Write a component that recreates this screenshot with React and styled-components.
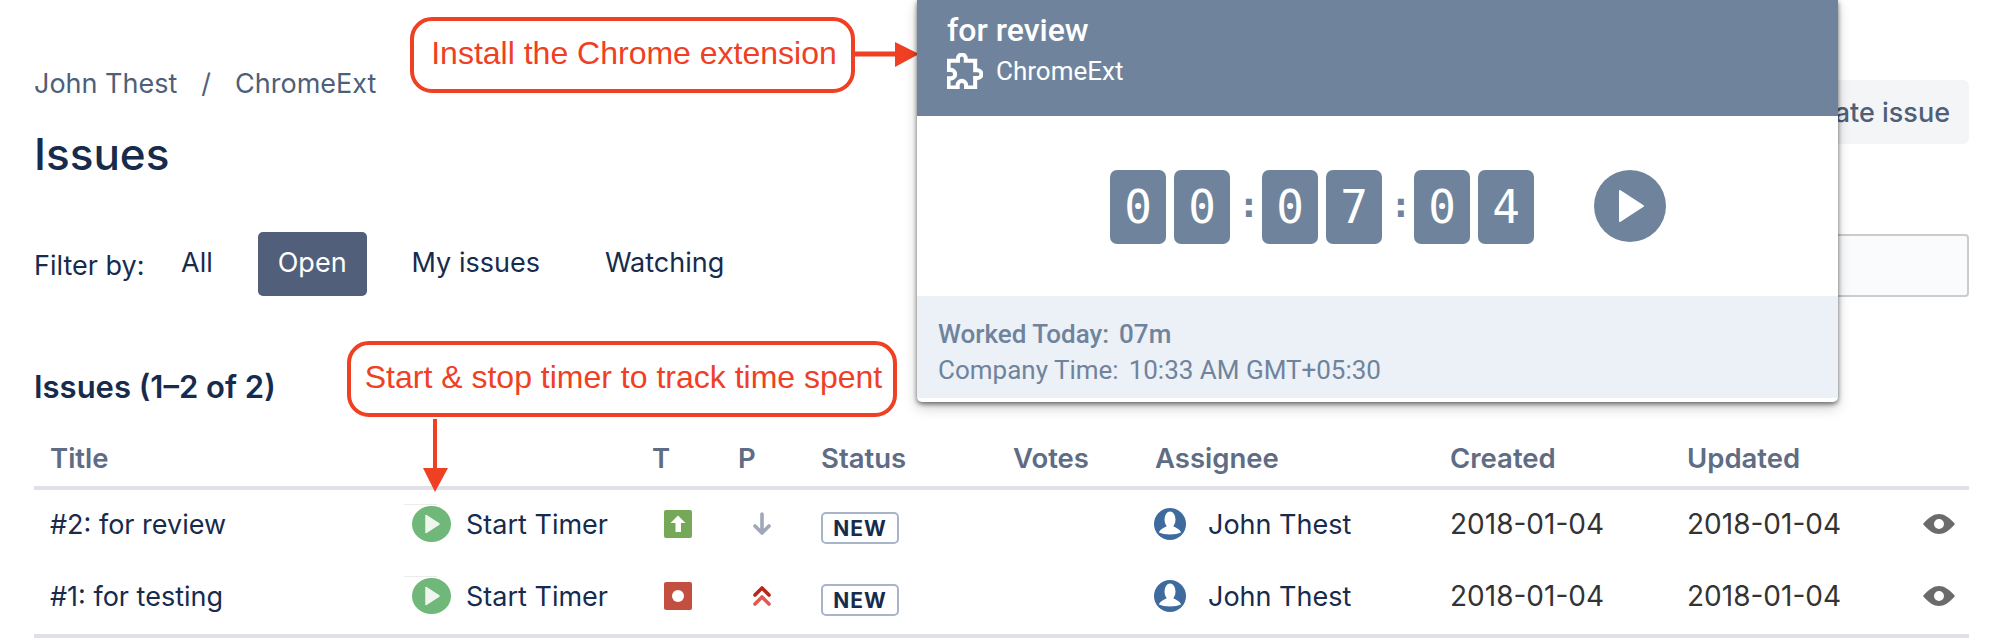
import React from 'react';
import styled, { createGlobalStyle } from 'styled-components';

const Global = createGlobalStyle`
  html, body { margin: 0; padding: 0; background: #fff; }
  body { font-family: Inter, "Liberation Sans", sans-serif; color: #172b4d; }
  * { box-sizing: border-box; }
`;

const Page = styled.div`
  position: relative;
  width: 1990px;
  height: 638px;
  overflow: hidden;
  padding: 0 21px 0 34px;
  background: #fff;
`;

const Head = styled.header`
  display: flex;
  justify-content: space-between;
  align-items: flex-start;
  height: 232px;
  padding-top: 65px;
`;

const Breadcrumb = styled.nav`
  display: flex;
  gap: 24px;
  font-size: 27px;
  line-height: 38px;
  color: #505f79;
`;

const Title = styled.h1`
  margin: 25px 0 0;
  font-size: 44px;
  line-height: 52px;
  font-weight: 500;
  color: #172b4d;
`;

const CreateButton = styled.button`
  margin-top: 15px;
  height: 64px;
  width: 300px;
  border: 0;
  border-radius: 6px;
  padding: 0 19px;
  background: #f4f5f7;
  color: #505f79;
  font: 500 27px Inter, sans-serif;
  text-align: right;
`;

const FilterBar = styled.div`
  display: flex;
  align-items: flex-start;
  height: 108px;
`;

const FilterLabel = styled.span`
  font-size: 27px;
  line-height: 34px;
  margin-top: 17px;
  width: 147px;
  color: #172b4d;
`;

const FilterLink = styled.a`
  display: flex;
  align-items: center;
  justify-content: center;
  height: 64px;
  padding: 0 ${(p) => p.$pad}px 4px;
  margin-right: ${(p) => p.$gap}px;
  border-radius: 5px;
  font-size: 27px;
  background: ${(p) => (p.$active ? '#525f7a' : 'transparent')};
  color: ${(p) => (p.$active ? '#fff' : '#172b4d')};
`;

const SearchInput = styled.div`
  margin-left: auto;
  margin-top: 2px;
  width: 400px;
  height: 63px;
  border: 2px solid #ccc;
  border-radius: 4px;
  background: #fafbfc;
`;

const IssueCount = styled.h2`
  margin: 29px 0 0;
  height: 52px;
  font-size: 31px;
  line-height: 36px;
  font-weight: 600;
  color: #172b4d;
`;

const Grid = styled.div`
  display: grid;
  grid-template-columns: 362px 256px 86px 83px 192px 142px 295px 237px 236px 46px;
`;

const HeadRow = styled.div`
  display: contents;
`;

const HeadCell = styled.div`
  height: 69px;
  padding-top: 20px;
  padding-left: ${(p) => p.$left || 0}px;
  font-size: 27.5px;
  line-height: 34px;
  font-weight: 600;
  color: #5e6c84;
  border-bottom: 4px solid #dfe1e6;
`;

const Cell = styled.div`
  display: flex;
  align-items: center;
  height: 72px;
  padding-bottom: 4px;
  padding-left: ${(p) => p.$left || 0}px;
  font-size: ${(p) => p.$size || 27}px;
  color: ${(p) => p.$color || '#172b4d'};
`;

const BottomRule = styled.div`
  grid-column: 1 / -1;
  height: 4px;
  background: #dfe1e6;
`;

const TimerButton = styled.span`
  display: flex;
  align-items: center;
  gap: 15px;
  position: relative;
  font-size: 27px;
  &::before {
    content: '';
    position: absolute;
    left: -8px;
    top: -2px;
    width: 33px;
    height: 1px;
    background: #ececec;
  }
`;

const Lozenge = styled.span`
  display: inline-flex;
  align-items: center;
  justify-content: center;
  width: 78px;
  height: 32px;
  border: 2px solid #a8b5c8;
  border-radius: 5px;
  font-size: 21px;
  font-weight: 700;
  letter-spacing: 1px;
  color: #172b4d;
  margin-top: 8px;
`;

const Person = styled.span`
  display: flex;
  align-items: center;
  gap: 22px;
  margin-left: -1px;
`;

const Popup = styled.section`
  position: absolute;
  left: 917px;
  top: 0;
  width: 921px;
  height: 402px;
  background: #fff;
  border-radius: 0 0 5px 5px;
  box-shadow: 0 2px 5px rgba(0, 0, 0, 0.55), 0 6px 14px rgba(0, 0, 0, 0.18);
  font-family: Roboto, sans-serif;
  overflow: hidden;
`;

const PopupHeader = styled.div`
  height: 116px;
  background: #6f849c;
  color: #fff;
  padding: 12px 30px 0;
`;

const PopupTitle = styled.div`
  font-size: 32px;
  line-height: 36px;
  font-weight: 500;
`;

const PopupProject = styled.div`
  display: flex;
  align-items: center;
  gap: 13px;
  margin-top: 1px;
  font-size: 26px;
  line-height: 44px;
`;

const Clock = styled.div`
  display: flex;
  align-items: flex-start;
  height: 180px;
  padding: 54px 0 0 193px;
`;

const Digit = styled.span`
  display: flex;
  align-items: center;
  justify-content: center;
  width: 56px;
  height: 74px;
  margin-right: 8px;
  border-radius: 7px;
  background: #6f849c;
  color: #fff;
  font-family: "DejaVu Sans Mono", monospace;
  font-size: 46px;
`;

const Colon = styled.span`
  width: 14px;
  height: 74px;
  margin-right: 10px;
  line-height: 70px;
  text-align: center;
  color: #6f849c;
  font-family: "DejaVu Sans Mono", monospace;
  font-weight: 700;
  font-size: 36px;
`;

const PlayRound = styled.span`
  display: block;
  width: 72px;
  height: 72px;
  margin-left: 52px;
`;

const PopupFooter = styled.div`
  height: 102px;
  background: #ecf0f7;
  padding: 20px 21px 0;
  font-size: 26px;
  color: #6f849c;
`;

const FooterLine = styled.div`
  display: flex;
  gap: 10px;
  line-height: 36px;
  font-weight: ${(p) => p.$weight};
`;

const Callout = styled.div`
  position: absolute;
  left: ${(p) => p.$x}px;
  top: ${(p) => p.$y}px;
  width: ${(p) => p.$w}px;
  height: ${(p) => p.$h}px;
  padding: 0 0 3px 3px;
  display: flex;
  align-items: center;
  justify-content: center;
  border: 4px solid #ef4023;
  border-radius: 22px;
  background: #fff;
  color: #ef4023;
  font-family: "Liberation Sans", Arial, sans-serif;
  font-size: 32px;
  white-space: nowrap;
`;

const ArrowRight = styled.svg`
  position: absolute;
  left: 852px;
  top: 40px;
`;

const ArrowDown = styled.svg`
  position: absolute;
  left: 421px;
  top: 419px;
`;

const PuzzleIcon = () => (
  <svg width="36" height="36" viewBox="1 0 23 23">
    <path
      d="M20.5 11H19V5h-6V3.5C13 2.12 11.88 1 10.5 1S8 2.12 8 3.5V5H2v5.8h1.5c1.49 0 2.7 1.21 2.7 2.7s-1.21 2.7-2.7 2.7H2V22h5.8v-1.5c0-1.49 1.21-2.7 2.7-2.7 1.49 0 2.7 1.21 2.7 2.7V22H19v-6h1.5c1.38 0 2.5-1.12 2.5-2.5S21.88 11 20.5 11z"
      fill="none"
      stroke="#fff"
      strokeWidth="2.6"
    />
  </svg>
);

const PlayDot = () => (
  <svg width="39" height="36" viewBox="0 0 39 36">
    <ellipse cx="19.5" cy="18" rx="19.5" ry="18" fill="#70b77a" />
    <path d="M14 9.5 L27 18 L14 26.5 Z" fill="#eef6ee" stroke="#eef6ee" strokeWidth="1.5" strokeLinejoin="round" />
  </svg>
);

const TypeIcon = ({ kind }) => (
  <svg width="28" height="28" viewBox="0 0 28 28">
    <rect width="28" height="28" rx="2" fill={kind === 'up' ? '#75a957' : '#c34f40'} />
    {kind === 'up' ? (
      <path d="M14 5.5 L21.5 13 H17 V22 H11.5 V13 H6.5 Z" fill="#fff" />
    ) : (
      <circle cx="14" cy="14" r="6" fill="#fff" />
    )}
  </svg>
);

const PriorityDown = () => (
  <svg width="18" height="24" viewBox="0 0 18 24">
    <path d="M9 2 V21 M2 14 L9 21 L16 14" fill="none" stroke="#a0a7b8" strokeWidth="3.6" strokeLinecap="round" strokeLinejoin="round" />
  </svg>
);

const PriorityHigh = () => (
  <svg width="18" height="22" viewBox="0 0 18 22">
    <path d="M2 10 L9 3 L16 10" fill="none" stroke="#b8281a" strokeWidth="3.6" strokeLinecap="round" strokeLinejoin="round" />
    <path d="M2 19 L9 12 L16 19" fill="none" stroke="#e05a50" strokeWidth="3.6" strokeLinecap="round" strokeLinejoin="round" />
  </svg>
);

const Avatar = () => (
  <svg width="32" height="32" viewBox="0 0 32 32">
    <circle cx="16" cy="16" r="16" fill="#3e6a9e" />
    <ellipse cx="16" cy="11.5" rx="5.5" ry="8" fill="#fff" />
    <path d="M5 24.5 C6 21 10 20 13 18 H19 C22 20 26 21 27 24.5 C22 27 10 27 5 24.5 Z" fill="#fff" />
  </svg>
);

const Eye = () => (
  <svg width="32" height="20" viewBox="0 0 32 20">
    <path fillRule="evenodd" d="M0 10 C6 3 11 0 16 0 C21 0 26 3 32 10 C26 17 21 20 16 20 C11 20 6 17 0 10 Z M16 5 A5 5 0 1 0 16 15 A5 5 0 1 0 16 5 Z" fill="#6b6b6b" />
  </svg>
);

const rows = [
  { title: '#2: for review', type: 'up', priority: <PriorityDown /> },
  { title: '#1: for testing', type: 'bug', priority: <PriorityHigh /> },
];

const columns = [
  ['Title', 16], ['', 0], ['T', 0], ['P', 0], ['Status', 0], ['Votes', 0],
  ['Assignee', 0], ['Created', 0], ['Updated', 0], ['', 0],
];

export default function App() {
  return (
    <Page>
      <Global />
      <Head>
        <div>
          <Breadcrumb>
            <span>John Thest</span>
            <span>/</span>
            <span>ChromeExt</span>
          </Breadcrumb>
          <Title>Issues</Title>
        </div>
        <CreateButton>Create issue</CreateButton>
      </Head>
      <FilterBar>
        <FilterLabel>Filter by:</FilterLabel>
        <FilterLink $pad={0} $gap={45}>All</FilterLink>
        <FilterLink $pad={20} $gap={45} $active>Open</FilterLink>
        <FilterLink $pad={0} $gap={65}>My issues</FilterLink>
        <FilterLink $pad={0} $gap={0}>Watching</FilterLink>
        <SearchInput />
      </FilterBar>
      <IssueCount>Issues (1–2 of 2)</IssueCount>
      <Grid>
        <HeadRow>
          {columns.map(([label, left], i) => (
            <HeadCell key={i} $left={left}>{label}</HeadCell>
          ))}
        </HeadRow>
        {rows.map((r) => (
          <React.Fragment key={r.title}>
            <Cell $left={16}>{r.title}</Cell>
            <Cell $left={16}>
              <TimerButton><PlayDot />Start Timer</TimerButton>
            </Cell>
            <Cell $left={12}><TypeIcon kind={r.type} /></Cell>
            <Cell $left={15}>{r.priority}</Cell>
            <Cell><Lozenge>NEW</Lozenge></Cell>
            <Cell />
            <Cell>
              <Person><Avatar />John Thest</Person>
            </Cell>
            <Cell $color="#333" $size={28}>2018-01-04</Cell>
            <Cell $color="#333" $size={28}>2018-01-04</Cell>
            <Cell><Eye /></Cell>
          </React.Fragment>
        ))}
        <BottomRule />
      </Grid>

      <Callout $x={410} $y={17} $w={445} $h={76}>Install the Chrome extension</Callout>
      <ArrowRight width="68" height="28" viewBox="0 0 68 28">
        <path d="M0 14 H44" stroke="#ef4023" strokeWidth="5" />
        <path d="M43 2 L67 14 L43 27 Z" fill="#ef4023" />
      </ArrowRight>
      <Callout $x={347} $y={341} $w={550} $h={76}>Start &amp; stop timer to track time spent</Callout>
      <ArrowDown width="28" height="74" viewBox="0 0 28 74">
        <path d="M14 0 V50" stroke="#ef4023" strokeWidth="4" />
        <path d="M2 49 H27 L14 73 Z" fill="#ef4023" />
      </ArrowDown>

      <Popup>
        <PopupHeader>
          <PopupTitle>for review</PopupTitle>
          <PopupProject>
            <PuzzleIcon />
            ChromeExt
          </PopupProject>
        </PopupHeader>
        <Clock>
          <Digit>0</Digit>
          <Digit>0</Digit>
          <Colon>:</Colon>
          <Digit>0</Digit>
          <Digit>7</Digit>
          <Colon>:</Colon>
          <Digit>0</Digit>
          <Digit>4</Digit>
          <PlayRound>
            <svg width="72" height="72" viewBox="0 0 72 72">
              <circle cx="36" cy="36" r="36" fill="#6f849c" />
              <path d="M26 21 L49 36 L26 51 Z" fill="#fff" stroke="#fff" strokeWidth="2" strokeLinejoin="round" />
            </svg>
          </PlayRound>
        </Clock>
        <PopupFooter>
          <FooterLine $weight={500}><span>Worked Today:</span><span>07m</span></FooterLine>
          <FooterLine $weight={400}><span>Company Time:</span><span>10:33 AM GMT+05:30</span></FooterLine>
        </PopupFooter>
      </Popup>
    </Page>
  );
}
